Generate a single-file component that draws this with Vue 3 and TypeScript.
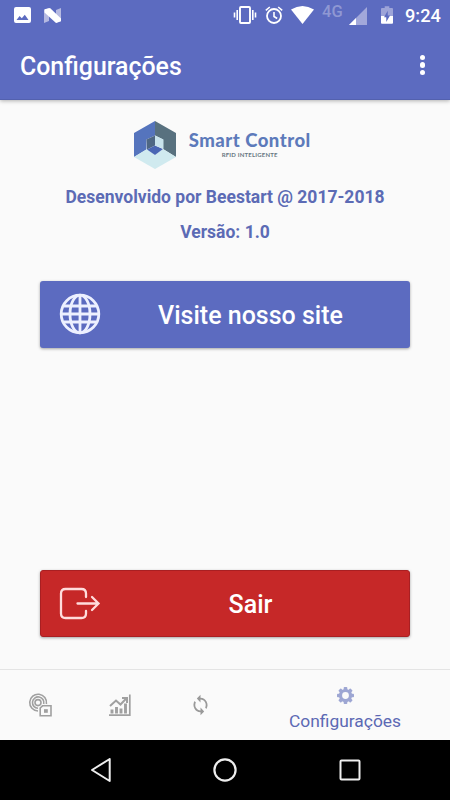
<script setup lang="ts">
import { ref } from 'vue'

const title = 'Configurações'
const credits: string[] = ['Desenvolvido por Beestart @ 2017-2018', 'Versão: 1.0']
const activeTab = ref<string>('settings')
const gearTeeth: number[] = [0, 45, 90, 135, 180, 225, 270, 315]
</script>

<template>
  <div class="screen">
    <header class="top">
      <div class="status">
        <svg class="s-picture" width="17" height="17" viewBox="0 0 17 17">
          <path fill="#fff" fill-rule="evenodd" d="M2 0h13q2 0 2 2v12q0 2-2 2H2q-2 0-2-2V2Q0 0 2 0zM2.5 13h12L10.8 7.8 7.8 11.3 5.6 8.9z" />
        </svg>
        <svg class="s-n" width="19" height="15" viewBox="0 0 19 15">
          <path fill="#b5b9e1" d="M1 2 6 0v13L1 15zM13 2 18 0v13L13 15z" />
          <path fill="#fff" d="M1.500 1.200 7 0 18 10.500v2.800L13 15 1.500 4.500z" />
        </svg>
        <span class="grow"></span>
        <svg class="s-vibrate" width="24" height="18" viewBox="0 0 24 18">
          <rect x="7" y="1" width="10" height="16" rx="1" fill="none" stroke="#fff" stroke-width="1.900" />
          <path d="M4.200 4v10M19.800 4v10M1.500 6.500v5M22.500 6.500v5" stroke="#fff" stroke-width="1.600" />
        </svg>
        <svg class="s-alarm" width="18" height="18" viewBox="0 0 18 18" fill="none" stroke="#fff">
          <circle cx="9" cy="10" r="7" stroke-width="1.800" />
          <path d="M9 6v4.500l3.200 2M.8 4.300 4.800 1M17.200 4.300l-4-3.300" stroke-width="1.600" />
        </svg>
        <svg class="s-wifi" width="23" height="18" viewBox="0 0 23 18">
          <path fill="#fff" d="M0 3.600Q11.500-3.600 23 3.600L11.500 18z" />
        </svg>
        <span class="s-net">4G</span>
        <svg class="s-signal" width="18" height="18" viewBox="0 0 18 18">
          <path fill="#a2a8da" d="M18 0v18H0z" />
          <path fill="#fff" d="M7 11v7H0z" />
        </svg>
        <svg class="s-battery" width="12" height="18" viewBox="0 0 13 19">
          <path fill="#9da4d8" d="M4 0h5v2h3q1 0 1 1v8H0V3q0-1 1-1h3z" />
          <path fill="#fff" d="M0 10.500h13V18q0 1-1 1H1q-1 0-1-1z" />
          <path fill="#5c6bc0" d="M7.300 5v5h2.500l-4.100 7v-5H3.300z" />
        </svg>
        <span class="clock">9:24</span>
      </div>
      <div class="appbar">
        <h1>{{ title }}</h1>
        <button class="more" aria-label="Menu"><i></i><i></i><i></i></button>
      </div>
    </header>

    <main>
      <div class="brand">
        <svg width="42" height="48" viewBox="0 0 42 48">
          <path fill="#5574bd" d="M21 0v14.500L12.500 18.500v10L0 36V12z" />
          <path fill="#58717f" d="M21 0 42 12v24L29 28V18.500l-8-4z" />
          <path fill="#d0eaef" d="M0 36 13 28 21 34l8-6 13 8L21 48z" />
          <path fill="#4e6784" d="m12.500 18.500 8.500-4v10L13 28.500z" />
          <path fill="#4a66b4" d="m13 28.500 8-4 8 3.500-8 6z" />
          <path fill="#c8e3ec" d="m21 14.500 8.500 4V28L21 24.500z" />
        </svg>
        <div class="brand-text">
          <strong>Smart Control</strong>
          <small>RFID INTELIGENTE</small>
        </div>
      </div>
      <p v-for="line in credits" :key="line">{{ line }}</p>

      <button class="action site">
        <svg width="42" height="42" viewBox="0 0 42 42" fill="none" stroke="#edf0ff" stroke-width="2.800">
          <circle cx="21" cy="21" r="18.800" />
          <ellipse cx="21" cy="21" rx="10" ry="18.800" />
          <path d="M21 2v38M2 21h38M5 13h32M5 29h32" />
        </svg>
        <span>Visite nosso site</span>
      </button>
      <button class="action exit">
        <svg width="42" height="42" viewBox="0 0 42 42" fill="none" stroke="#ffdcdc" stroke-width="2.300" stroke-linecap="round">
          <path d="M27 14V10.500q0-4.500-4.500-4.500H6.500Q2 6 2 10.500v20Q2 35 6.500 35h16q4.500 0 4.500-4.500V28" />
          <path d="M18.500 20.500H39.500M33 14l6.500 6.500L33 27" />
        </svg>
        <span>Sair</span>
      </button>
    </main>

    <nav class="tabs">
      <button @click="activeTab = 'rfid'">
        <svg width="24" height="24" viewBox="0 0 24 24" fill="none" stroke="#a0a0a0" stroke-width="1.600">
          <path d="M10 18A8.400 8.400 0 1 1 18.400 11M10 15.300A5.700 5.700 0 1 1 15.700 11" />
          <circle cx="10" cy="9.600" r="3" />
          <path d="M14.500 12.800H23v10H12.200V15z" fill="#fafafa" />
          <rect x="16" y="16.200" width="3.800" height="3.600" fill="#a0a0a0" stroke="none" />
        </svg>
      </button>
      <button @click="activeTab = 'chart'">
        <svg width="24" height="24" viewBox="0 0 24 24" fill="none" stroke="#a0a0a0">
          <path d="M1 22.200h20.800V1.500" stroke-width="1.700" />
          <path d="M4 20.500v-4M8.500 20.500V14M13 20.500v-5M17.500 20.500v-10" stroke-width="2.900" />
          <path d="m2 13 6-5.500 4.500 4L18 5.800M14 4.900h5v5" stroke-width="2" />
        </svg>
      </button>
      <button @click="activeTab = 'sync'">
        <svg width="21" height="22" viewBox="0 0 24 24" preserveAspectRatio="none" fill="#999">
          <path d="M12 4V.800L7.800 5 12 9.200V6a6 6 0 0 1 5.300 8.800l1.450 1.450A8 8 0 0 0 12 4zM12 18a6 6 0 0 1-5.300-8.800L5.250 7.750A8 8 0 0 0 12 20v3.200l4.200-4.200L12 14.800z" />
        </svg>
      </button>
      <button class="settings" :class="{ active: activeTab === 'settings' }" @click="activeTab = 'settings'">
        <svg width="17" height="17" viewBox="0 0 17 17">
          <circle cx="8.500" cy="8.500" r="5" fill="none" stroke="#9da6d3" stroke-width="3.200" />
          <rect v-for="angle in gearTeeth" :key="angle" x="6.700" y="0" width="3.600" height="3.500" rx=".8" fill="#9da6d3" :transform="`rotate(${angle} 8.500 8.500)`" />
        </svg>
        <span>{{ title }}</span>
      </button>
    </nav>

    <footer>
      <svg width="20" height="24" viewBox="0 0 20 24" fill="none" stroke="#eee" stroke-width="2" stroke-linejoin="round"><path d="M18.700 1v22L1 12z" /></svg>
      <svg width="24" height="24" viewBox="0 0 24 24" fill="none" stroke="#eee" stroke-width="2.200"><circle cx="12" cy="12" r="10.600" /></svg>
      <svg width="22" height="22" viewBox="0 0 22 22" fill="none" stroke="#eee" stroke-width="2"><rect x="1.500" y="1.500" width="19" height="19" rx="1" /></svg>
    </footer>
  </div>
</template>

<style>
body {
  margin: 0;
}
</style>

<style scoped>
.screen {
  width: 450px;
  height: 800px;
  display: flex;
  flex-direction: column;
  background: #fafafa;
  font-family: Roboto, sans-serif;
  overflow: hidden;
}
svg {
  display: block;
  flex: none;
}
button {
  border: 0;
  padding: 0;
  background: none;
  font-family: inherit;
}
.top {
  height: 100px;
  flex: none;
  box-sizing: border-box;
  background: #5c6bc0;
  color: #fff;
  border-bottom: 1px solid #5361ae;
  box-shadow: 0 1px 4px rgba(0, 0, 0, 0.3);
}
.status {
  height: 31px;
  display: flex;
  align-items: center;
  padding: 0 10px 0 14px;
}
.s-n {
  margin-left: 12px;
}
.s-vibrate,
.s-alarm,
.s-wifi {
  margin-top: -1px;
}
.grow {
  flex: 1;
}
.s-alarm {
  margin-left: 8px;
}
.s-wifi {
  margin-left: 8px;
}
.s-net {
  width: 22px;
  margin: 0 5px 8px 8px;
  font-size: 16.5px;
  font-weight: 500;
  line-height: 16px;
  color: #8f98d3;
}
.s-battery {
  margin: 0 12px 1px 14px;
}
.clock {
  width: 35px;
  font-size: 18.2px;
  font-weight: 500;
  line-height: 33px;
  white-space: nowrap;
}
.appbar {
  height: 68px;
  display: flex;
  align-items: center;
  justify-content: space-between;
  padding: 0 25px 0 20px;
}
h1 {
  margin: 3px 0 0;
  font-size: 24.9px;
  font-weight: 500;
}
.more {
  display: grid;
  gap: 2.2px;
}
.more i {
  width: 5.2px;
  height: 5.2px;
  border-radius: 50%;
  background: #fff;
}
main {
  flex: 1;
  display: flex;
  flex-direction: column;
  align-items: center;
  padding: 20.5px 40px 32px;
}
.brand {
  display: flex;
  gap: 13px;
  height: 48px;
  margin: 0 0 17.5px -5.5px;
}
.brand-text {
  display: flex;
  flex-direction: column;
  align-items: center;
  padding-top: 8px;
  color: #5d7abb;
}
.brand-text strong {
  font-family: Lato, sans-serif;
  font-size: 18.5px;
  font-weight: 900;
  line-height: 22px;
  letter-spacing: 0.5px;
  white-space: nowrap;
}
.brand-text small {
  font-family: Lato, sans-serif;
  font-size: 6px;
  line-height: 8px;
  font-weight: 700;
  letter-spacing: 0.2px;
  color: #667782;
}
p {
  margin: 0 0 13px;
  font-size: 17.5px;
  line-height: 22px;
  font-weight: 700;
  color: #5c6bb5;
  white-space: nowrap;
}
.action {
  width: 370px;
  height: 67px;
  box-sizing: border-box;
  display: flex;
  align-items: center;
  padding: 0 10px 0 19px;
  border-radius: 3px;
  color: #fff;
  font-size: 25px;
  font-weight: 500;
  box-shadow: 0 1px 3px rgba(0, 0, 0, 0.35);
}
.action span {
  flex: 1;
  text-align: center;
  padding-top: 1px;
}
.action svg {
  margin-bottom: 1px;
}
.site {
  margin-top: 25px;
  background: #5c6bc0;
}
.exit {
  margin-top: auto;
  background: #c62828;
  border: 1px solid #a91f22;
  padding: 0 9px 0 18px;
}
.exit svg {
  margin-bottom: 0;
}
.tabs {
  height: 70px;
  flex: none;
  display: grid;
  grid-template-columns: 80px 80px 80px 210px;
  border-top: 1px solid #e4e4e4;
}
.tabs button {
  display: flex;
  flex-direction: column;
  align-items: center;
  justify-content: center;
  gap: 7px;
}
.tabs .settings {
  justify-content: flex-start;
  padding-top: 17px;
  font-size: 17.4px;
  line-height: 20px;
  color: #777;
}
.tabs .active {
  color: #5c69b4;
}
footer {
  height: 60px;
  flex: none;
  display: flex;
  align-items: center;
  justify-content: center;
  gap: 102px;
  padding-left: 1px;
  background: #000;
}
</style>
